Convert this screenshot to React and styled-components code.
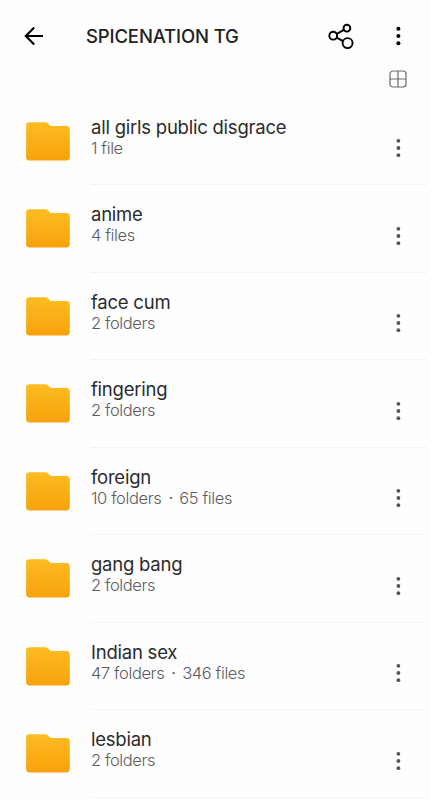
import React from "react";
import styled, { createGlobalStyle } from "styled-components";

const GlobalStyle = createGlobalStyle`
  * {
    box-sizing: border-box;
  }

  body {
    margin: 0;
    background: #fefefe;
    font-family: Inter, "Liberation Sans", sans-serif;
  }

  button {
    display: flex;
    padding: 0;
    border: none;
    background: none;
    cursor: pointer;
  }
`;

const Screen = styled.div`
  height: 800px;
  overflow: hidden;
  background: #fefefe;
`;

const TopBar = styled.header`
  display: flex;
  align-items: center;
  height: 72px;
  padding: 0 27px 0 22px;
`;

const Title = styled.h1`
  flex: 1;
  margin: 0 0 0 40px;
  color: #222224;
  font-size: 18.5px;
  font-weight: 500;
  line-height: 24px;
  letter-spacing: -0.14px;
  white-space: nowrap;
`;

const ShareButton = styled.button`
  margin-right: 38px;
`;

const ViewBar = styled.div`
  display: flex;
  justify-content: flex-end;
  height: 25.7px;
  padding-right: 24px;

  button {
    height: 18px;
    margin-top: -2px;
  }
`;

const List = styled.ul`
  margin: 0;
  padding: 0 4px 0 25px;
  list-style: none;
`;

const Row = styled.li`
  display: flex;
  height: 87.5px;

  > svg {
    flex-shrink: 0;
    margin: 23.1px 20px 0 0;
  }
`;

const RowBody = styled.div`
  flex: 1;
  display: flex;
  justify-content: space-between;
  padding: 18.1px 23px 0 0;
  border-bottom: 1px solid #f3f3f3;

  button {
    height: 20px;
    margin-top: 22.6px;
  }
`;

const Name = styled.div`
  color: #2b2b2d;
  font-size: 18.5px;
  font-weight: 400;
  line-height: 22px;
  letter-spacing: -0.23px;
`;

const Info = styled.div`
  display: flex;
  color: #5c5c5f;
  font-size: 16.5px;
  font-weight: 300;
  line-height: 21px;
  letter-spacing: -0.38px;
`;

const Separator = styled.span`
  margin: 0 6.5px 0 7px;
  font-weight: 400;
`;

const BackIcon = () => (
  <svg width="24" height="24" viewBox="0 0 24 24" fill="none" stroke="#000" strokeWidth="2.1">
    <path d="M21 12H3.6M12.2 3.6L3.8 12l8.4 8.4" />
  </svg>
);

const ShareIcon = () => (
  <svg width="26" height="26" viewBox="0 0 26 26" fill="none" stroke="#000" strokeWidth="1.9">
    <circle cx="5.2" cy="12.7" r="3.9" />
    <circle cx="18.9" cy="5.2" r="3.4" />
    <circle cx="19.6" cy="20.1" r="5" />
    <path d="M8.7 10.9l7.2-4M8.6 14.7l6.6 3.4" />
  </svg>
);

const GridIcon = () => (
  <svg width="18" height="18" viewBox="0 0 18 18" fill="none" stroke="#6a6a6c" strokeWidth="1.2">
    <rect x="1" y="1" width="16" height="16" rx="3" />
    <path d="M9 1v16M1 9h16" />
  </svg>
);

const Dots = ({ color, size }) => (
  <svg width="12" height="20" viewBox="0 0 12 20" fill={color}>
    <circle cx="6.4" cy="2.8" r={size} />
    <circle cx="6.4" cy="10" r={size} />
    <circle cx="6.4" cy="17.2" r={size} />
  </svg>
);

const FolderIcon = () => (
  <svg width="46" height="42" viewBox="0 0 46 42">
    <defs>
      <linearGradient id="folder" x1="0" y1="0" x2="0" y2="1">
        <stop offset="0" stopColor="#fdbc22" />
        <stop offset="1" stopColor="#f8a20d" />
      </linearGradient>
    </defs>
    <path
      fill="url(#folder)"
      d="M4.2 1.2h15.6c1.5 0 2.4.4 3.4 1.4l1.1 1.1c.9.9 1.7 1.4 3.2 1.4h14.1c2 0 3.2 1.2 3.2 3.1v28c0 2-1.3 3.3-3.3 3.3H4.4c-2 0-3.3-1.3-3.3-3.3v-32c0-1.8 1.2-3 3.1-3z"
    />
  </svg>
);

const folders = [
  { name: "all girls public disgrace", info: ["1 file"] },
  { name: "anime", info: ["4 files"] },
  { name: "face cum", info: ["2 folders"] },
  { name: "fingering", info: ["2 folders"] },
  { name: "foreign", info: ["10 folders", "65 files"] },
  { name: "gang bang", info: ["2 folders"] },
  { name: "Indian sex", info: ["47 folders", "346 files"] },
  { name: "lesbian", info: ["2 folders"] }
];

const FolderRow = ({ name, info }) => (
  <Row>
    <FolderIcon />
    <RowBody>
      <div>
        <Name>{name}</Name>
        <Info>
          {info.map((part, i) => (
            <React.Fragment key={part}>
              {i > 0 && <Separator>·</Separator>}
              <span>{part}</span>
            </React.Fragment>
          ))}
        </Info>
      </div>
      <button aria-label="More">
        <Dots color="#555558" size={1.9} />
      </button>
    </RowBody>
  </Row>
);

export default function App() {
  return (
    <Screen>
      <GlobalStyle />
      <TopBar>
        <button aria-label="Back">
          <BackIcon />
        </button>
        <Title>SPICENATION TG</Title>
        <ShareButton aria-label="Share">
          <ShareIcon />
        </ShareButton>
        <button aria-label="Menu">
          <Dots color="#000" size={2} />
        </button>
      </TopBar>
      <ViewBar>
        <button aria-label="Grid view">
          <GridIcon />
        </button>
      </ViewBar>
      <List>
        {folders.map((folder) => (
          <FolderRow key={folder.name} {...folder} />
        ))}
      </List>
    </Screen>
  );
}
